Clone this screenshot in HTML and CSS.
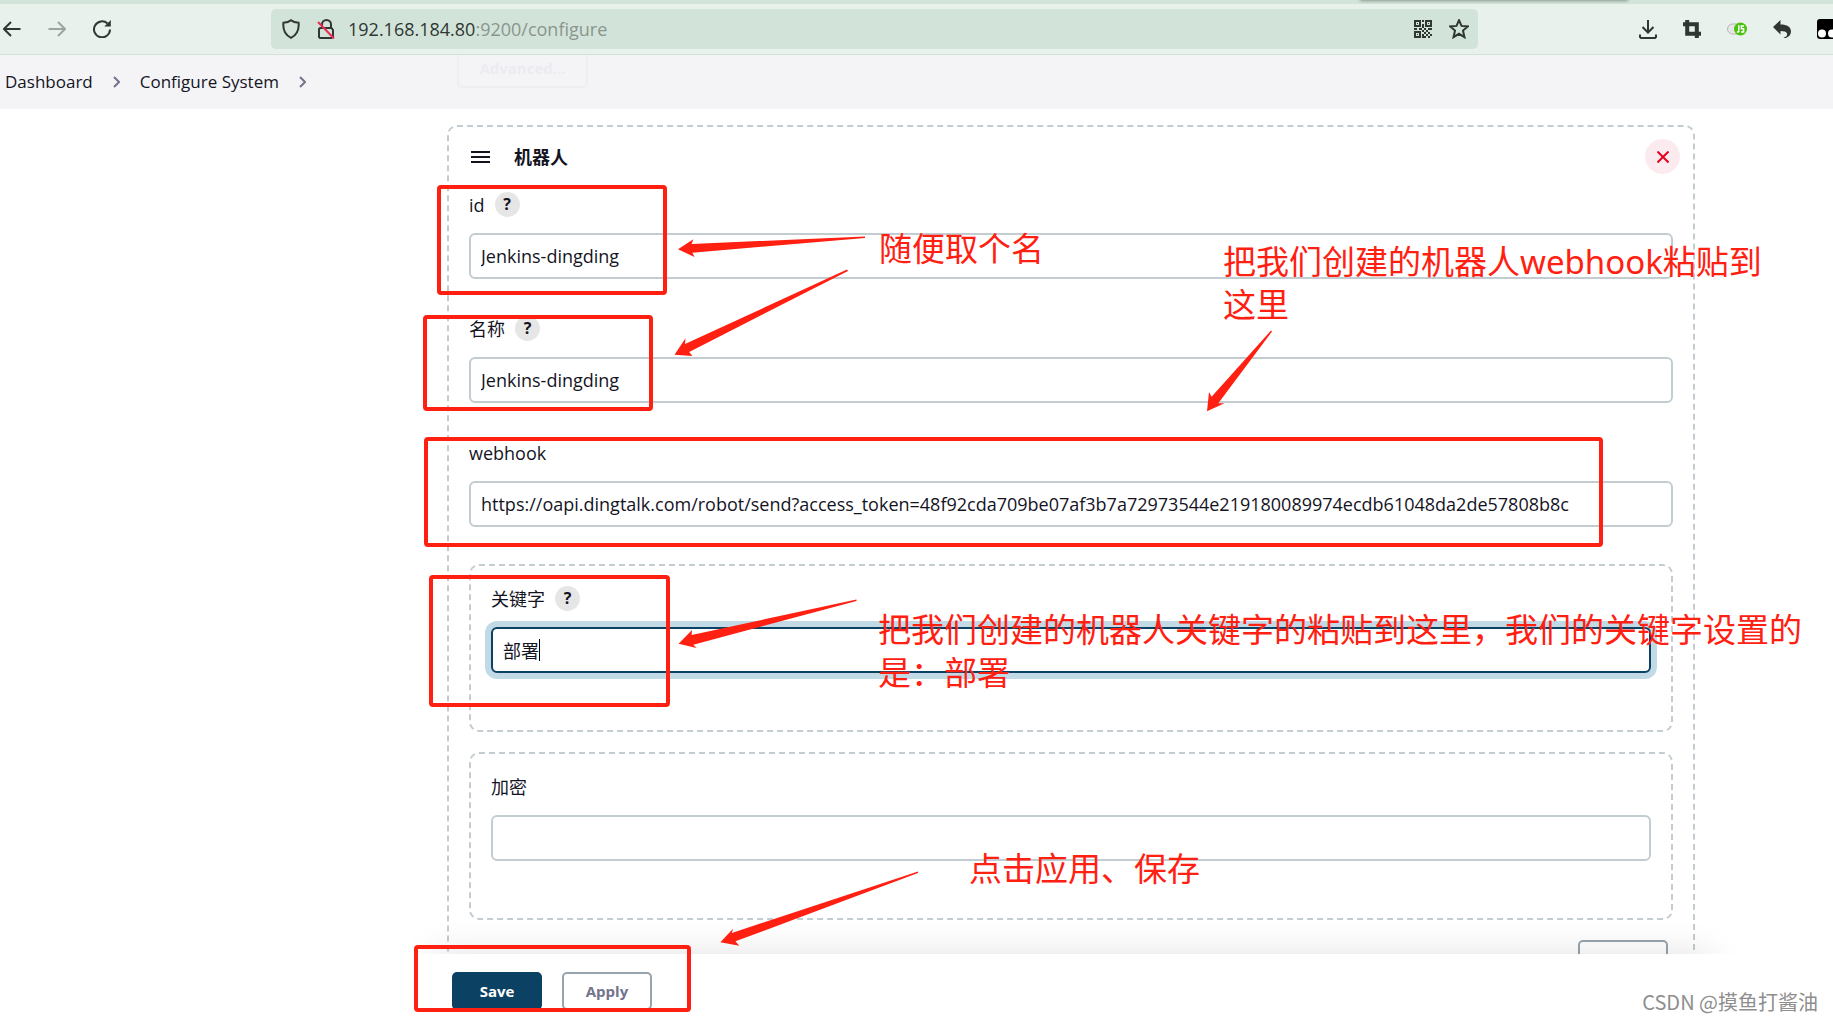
FILE: index.html
```
<!DOCTYPE html>
<html lang="zh-CN">
<head>
<meta charset="utf-8">
<title>Configure System</title>
<link rel="stylesheet" href="styles.css">
</head>
<body>
<div class="tab-strip"><span class="tab-edge"></span></div>
<nav class="toolbar" aria-label="Browser">
  <div class="nav-buttons">
    <button class="icon-btn" aria-label="Back"><svg width="18" height="18" viewBox="0 0 18 18"><path d="M17.500 9H1M8 2L1 9l7 7"/></svg></button>
    <button class="icon-btn dim" aria-label="Forward"><svg width="18" height="18" viewBox="0 0 18 18"><path d="M.5 9H17M10 2l7 7-7 7"/></svg></button>
    <button class="icon-btn" aria-label="Reload"><svg width="18" height="18" viewBox="0 0 18 18"><path d="M17 9.500A8 8 0 1 1 14.500 3.500"/><path class="solid" d="M17.800 0v6.500h-6.500z"/></svg></button>
  </div>
  <div class="address">
    <svg width="18" height="20" viewBox="0 0 18 20"><path d="M9 1.200c2 1.700 4.800 2.400 7.600 2.600.6 6.600-1.800 12.200-7.600 15C3.200 16 .8 10.400 1.400 3.800 4.200 3.600 7 2.900 9 1.200z"/></svg>
    <svg width="18" height="20" viewBox="0 0 18 20"><path d="M5 8V5.500a4.500 4.500 0 0 1 9 0V9M3 9h11.500l1.500 2v6.500l-1.500 1.500H3l-1-1V10z"/><path class="strike" d="M1 3l16 16.500"/></svg>
    <span class="url">192.168.184.80<span class="url-rest">:9200/configure</span></span>
    <svg width="18" height="18" viewBox="0 0 18 18"><path d="M1 1h5v5H1zM12 1h5v5h-5zM1 12h5v5H1z"/><path class="solid" d="M3 3h1v1H3zM14 3h1v1h-1zM3 14h1v1H3zM8 0h2v2H8zM8 4h2v4H8zM0 8h3v2H0zM5 8h3v2H5zM10 8h2v2h-2zM14 8h4v2h-4zM8 10h2v2H8zM12 10h2v2h-2zM10 12h2v2h-2zM14 12h2v2h-2zM8 14h2v4H8zM12 14h2v2h-2zM16 14h2v2h-2zM10 16h2v2h-2zM14 16h2v2h-2z"/></svg>
    <svg width="20" height="20" viewBox="0 0 20 20"><path d="M10 1.200l2.500 5.700 6.300.6-4.800 4.100 1.500 6.600-5.500-3.400-5.500 3.400L6 11.600 1.200 7.500l6.300-.6z"/></svg>
  </div>
  <div class="extensions">
    <button class="icon-btn" aria-label="Downloads"><svg width="18" height="20" viewBox="0 0 18 20"><path d="M9 1v12.500M3.500 8L9 13.500 14.500 8M1 15.500V18l1 1h14l1-1v-2.500"/></svg></button>
    <button class="icon-btn" aria-label="Crop"><svg width="18" height="18" viewBox="0 0 18 18"><path class="thick" d="M0 4.200h13.800V18M4.200 0v13.800H18"/></svg></button>
    <button class="icon-btn" aria-label="JavaScript"><svg width="20" height="14" viewBox="0 0 20 14"><rect class="pill" x=".5" y="2" width="15" height="10" rx="5"/><circle class="green" cx="13.500" cy="7" r="6.500"/><path class="js" d="M11.800 3.300v5.900q0 1-1.900.9M17 3.900h-2.600v2.900h2.200v3.200h-2.600"/></svg></button>
    <button class="icon-btn" aria-label="Undo"><svg width="18" height="18" viewBox="0 0 18 18"><path class="solid" d="M7.500 0v4.500C14 4.500 18 7 18 11.500c0 3-2 5.200-5 6.500-1 .3-1.500 0-2.500-.5 3-.7 4-2 3.500-4-.6-1.800-3-2.500-6.500-2.500v3.500L0 7z"/></svg></button>
    <button class="icon-btn" aria-label="Tampermonkey"><svg width="20" height="20" viewBox="0 0 20 20"><rect class="black" width="20" height="20" rx="3"/><circle class="eye" cx="5" cy="14.500" r="4"/><circle class="eye" cx="15" cy="14.500" r="4"/></svg></button>
  </div>
</nav>
<nav class="breadcrumbs" aria-label="Breadcrumb">
  <a href="#">Dashboard</a>
  <svg width="7" height="12" viewBox="0 0 7 12"><path d="M1 1l5 5-5 5"/></svg>
  <a href="#">Configure System</a>
  <svg width="7" height="12" viewBox="0 0 7 12"><path d="M1 1l5 5-5 5"/></svg>
  <button class="advanced">Advanced...</button>
</nav>
<main>
  <form class="card" id="robot">
    <header class="card-head">
      <svg width="19" height="12" viewBox="0 0 19 12"><path d="M0 1h19M0 6h19M0 11h19"/></svg>
      <h2>机器人</h2>
      <button type="button" class="close" aria-label="Delete"><svg width="12" height="12" viewBox="0 0 12 12"><path d="M.5.5l11 11M11.500.5l-11 11"/></svg></button>
    </header>
    <div class="fields">
      <div class="field">
        <div class="label-row"><label for="rid">id</label><button type="button" class="help">?</button></div>
        <input id="rid" type="text" value="Jenkins-dingding">
      </div>
      <div class="field">
        <div class="label-row"><label for="rname">名称</label><button type="button" class="help">?</button></div>
        <input id="rname" type="text" value="Jenkins-dingding">
      </div>
      <div class="field">
        <div class="label-row"><label for="hook">webhook</label></div>
        <input id="hook" type="text" value="https://oapi.dingtalk.com/robot/send?access_token=48f92cda709be07af3b7a72973544e219180089974ecdb61048da2de57808b8c">
      </div>
    </div>
    <section class="group">
      <div class="field">
        <div class="label-row"><label for="keyword">关键字</label><button type="button" class="help">?</button></div>
        <div class="active"><input id="keyword" type="text" value="部署"><span class="caret"></span></div>
      </div>
    </section>
    <section class="group">
      <div class="field">
        <div class="label-row"><label for="secret">加密</label></div>
        <input id="secret" type="text">
      </div>
    </section>
    <button type="button" class="outline more" aria-label="Delete robot"></button>
  </form>
</main>
<footer>
  <div class="actions">
    <button form="robot" class="primary">Save</button>
    <button form="robot" type="button" class="outline">Apply</button>
  </div>
  <div class="watermark">CSDN @摸鱼打酱油</div>
</footer>
<div class="notes">
  <svg width="1833" height="1021" viewBox="0 0 1833 1021">
    <g class="frames">
      <rect x="439" y="187" width="226" height="106" rx="2"/>
      <rect x="425" y="317" width="226" height="92" rx="2"/>
      <rect x="426" y="439" width="1175" height="106" rx="2"/>
      <rect x="431" y="577" width="237" height="128" rx="2"/>
      <rect x="416" y="947" width="273" height="63" rx="2"/>
    </g>
    <g class="arrows">
      <path d="M678 249.300L693.300 239.300 691.600 244 865 236.500V238L692.400 252.700 694.500 257z"/>
      <path d="M674.500 354.700L685.500 338.300 685 344 847 269.500 848 271 689.200 352 692.400 356z"/>
      <path d="M1207 411.300L1209 392 1211.600 396.700 1271 330.500 1272 331.500 1218.300 403.300 1224.500 403.300z"/>
      <path d="M678.600 643.700L692 630 691.600 635 856.500 599.500V601L693.300 644.700 696.500 648z"/>
      <path d="M720.400 942.300L733 928.700 731.800 933 918 871.500V873L735.500 941.300 739.200 945.700z"/>
    </g>
  </svg>
  <p class="note note-name">随便取个名</p>
  <p class="note note-hook">把我们创建的机器人webhook粘贴到<br>这里</p>
  <p class="note note-keyword">把我们创建的机器人关键字的粘贴到这里，我们的关键字设置的<br>是：部署</p>
  <p class="note note-save">点击应用、保存</p>
</div>
</body>
</html>
```
FILE: styles.css
```
* { box-sizing: border-box; }
body {
  margin: 0;
  height: 100vh;
  display: flex;
  flex-direction: column;
  position: relative;
  overflow: hidden;
  background: #fff;
  color: #14141f;
  font: 17px/24px "Open Sans", "Noto Sans CJK SC", sans-serif;
}
button, input { font: inherit; color: inherit; margin: 0; }
button { padding: 0; border: 0; background: none; }
svg { display: block; flex: none; fill: none; stroke: currentColor; }

.tab-strip { height: 4px; flex: none; background: #d2e4d9; display: flex; justify-content: flex-end; overflow: hidden; }
.tab-edge { width: 266px; height: 0; margin-right: 206px; box-shadow: 0 0 3px 1px #7d8881; }
.toolbar {
  height: 51px;
  flex: none;
  display: flex;
  align-items: center;
  background: #e8f1eb;
  border-bottom: 1px solid #d2e4d9;
  color: #303632;
}
.toolbar svg { stroke-width: 2; }
.nav-buttons { display: flex; gap: 27px; width: 271px; padding-left: 3px; flex: none; }
.dim { opacity: .4; }
.address {
  flex: 1;
  height: 40px;
  display: flex;
  align-items: center;
  gap: 17px;
  padding: 0 9px 0 11px;
  border-radius: 5px;
  background: #d2e4d9;
}
.url { flex: 1; margin-left: -4px; font-size: 18px; }
.url-rest { color: #8a958e; }
.extensions { width: 355px; flex: none; display: flex; align-items: center; gap: 26px; padding-left: 161px; overflow: hidden; }
.solid { fill: currentColor; stroke: none; }
.toolbar .strike { stroke: #ee2a52; }
.toolbar .thick { stroke-width: 4; }
.toolbar .pill { fill: #e6e6e6; stroke: #b5b5b5; stroke-width: 1; }
.green { fill: #4bc10e; stroke: none; }
.toolbar .js { stroke: #fff; stroke-width: 1.500; }
.black { fill: #000; stroke: none; }
.eye { fill: #fff; stroke: none; }

.breadcrumbs {
  position: relative;
  height: 54px;
  flex: none;
  display: flex;
  align-items: center;
  gap: 20px;
  padding-left: 5px;
  background: #f4f4f7;
  overflow: hidden;
}
.breadcrumbs a { color: inherit; text-decoration: none; }
.breadcrumbs svg { stroke: #73738c; stroke-width: 2; }
.advanced {
  position: absolute;
  left: 457px;
  top: -8px;
  width: 131px;
  height: 41px;
  border: 2px solid #eeeef2;
  border-radius: 5px;
  color: #ebebf1;
  font-size: 15px;
  font-weight: 700;
}

main { flex: 1; min-height: 0; position: relative; overflow: hidden; padding: 16px 138px 0 447px; }
main::after {
  content: "";
  position: absolute;
  left: 432px;
  right: 122px;
  bottom: -40px;
  height: 40px;
  box-shadow: 0 0 36px rgba(0, 0, 0, .12);
}
.card { padding: 0 20px 20px; border: 2px dashed #c3ccd1; border-radius: 10px; }
.card-head { display: flex; align-items: center; height: 35px; margin: 12px -7px 18px 0; padding-left: 2px; }
.card-head svg { stroke-width: 2; }
.card-head h2 { margin: 0 auto 0 24px; font-size: 18px; line-height: 24px; }
.close { width: 35px; height: 35px; border-radius: 50%; background: #fcebee; color: #e6001f; display: grid; place-items: center; }
.card-head .close svg { stroke-width: 2; }
.fields { display: flex; flex-direction: column; gap: 37px; margin-bottom: 37px; }
.label-row { display: flex; align-items: center; gap: 10px; height: 25px; margin-bottom: 16px; }
.help { width: 25px; height: 25px; border-radius: 50%; background: #e6e6e6; font-size: 16px; font-weight: 700; line-height: 25px; }
input {
  display: block;
  width: 100%;
  height: 46px;
  padding: 0 10px;
  border: 2px solid #c3ccd1;
  border-radius: 6px;
  background: #fff;
  font-size: 18px;
  outline: 0;
}
label { font-size: 17px; }
.label-row label:lang(zh) { font-size: 18px; }
.group { padding: 20px 20px 57px; margin-bottom: 20px; border: 2px dashed #c3ccd1; border-radius: 10px; }
.active { position: relative; }
.active input { border-color: #0b4163; box-shadow: 0 0 0 6px #c2d9e6; }
.caret { position: absolute; left: 48px; top: 12px; width: 1px; height: 22px; background: #000; }
.outline { width: 90px; height: 38px; border: 2px solid #98a4ad; border-radius: 5px; background: #fff; color: #73738c; }
.more { display: block; margin: 0 5px 0 auto; background: none; }

footer { position: relative; height: 67px; flex: none; background: #fff; padding: 18px 15px 0 452px; display: flex; justify-content: space-between; }
.actions { display: flex; gap: 20px; height: 36px; overflow: hidden; font-size: 15px; font-weight: 700; }
.primary { width: 90px; height: 38px; border-radius: 5px; background: #0b4163; color: #fff; }
.watermark { margin-top: 16px; color: #8e8e8e; font: 20px/28px "Noto Sans CJK SC", sans-serif; }

.notes { position: absolute; inset: 0; overflow: hidden; pointer-events: none; }
.frames { stroke: #ff2012; stroke-width: 4; }
.arrows { fill: #ff2012; stroke: none; }
.note { position: absolute; margin: 0; color: #ff2012; font: 33px/43px "Noto Sans", "Noto Sans CJK SC", sans-serif; white-space: nowrap; }
.note-name { left: 879px; top: 227px; }
.note-hook { left: 1223px; top: 240px; }
.note-keyword { left: 878px; top: 608px; }
.note-save { left: 969px; top: 847px; }
```
